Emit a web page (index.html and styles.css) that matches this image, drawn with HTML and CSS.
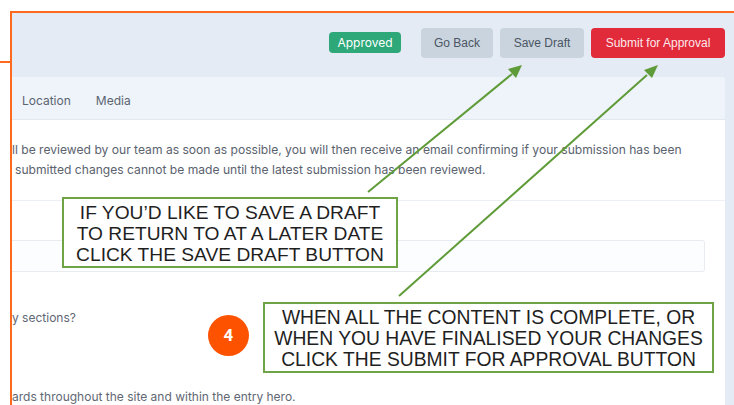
FILE: index.html
```html
<!DOCTYPE html>
<html lang="en">
<head>
<meta charset="utf-8">
<title>Edit Entry</title>
<link rel="stylesheet" href="styles.css">
</head>
<body>
<div class="frame">
  <header class="topbar">
    <span class="badge">Approved</span>
    <button class="btn btn-muted">Go Back</button>
    <button class="btn btn-muted">Save Draft</button>
    <button class="btn btn-danger">Submit for Approval</button>
  </header>
  <section class="card">
    <nav class="tabs">
      <span class="tab">Location</span>
      <span class="tab">Media</span>
    </nav>
    <div class="notice">
      <p>ll be reviewed by our team as soon as possible, you will then receive an email confirming if your submission has been</p>
      <p class="indent">submitted changes cannot be made until the latest submission has been reviewed.</p>
    </div>
    <div class="field">
      <div class="input"></div>
    </div>
    <p class="question">y sections?</p>
    <p class="question last">ards throughout the site and within the entry hero.</p>
  </section>
</div>

<span class="tick"></span>

<div class="callout callout-draft">IF YOU’D LIKE TO SAVE A DRAFT<br>TO RETURN TO AT A LATER DATE<br>CLICK THE SAVE DRAFT BUTTON</div>
<div class="callout callout-submit">WHEN ALL THE CONTENT IS COMPLETE, OR<br>WHEN YOU HAVE FINALISED YOUR CHANGES<br>CLICK THE SUBMIT FOR APPROVAL BUTTON</div>
<div class="step">4</div>

<svg class="arrows" width="734" height="405" viewBox="0 0 734 405">
  <!-- pointer to Save Draft -->
  <line x1="368" y1="192" x2="512" y2="74" />
  <polygon points="522,65 516,78 508,69" />
  <!-- pointer to Submit for Approval -->
  <line x1="399" y1="296" x2="647" y2="75" />
  <polygon points="658,65 652,78 644,70" />
</svg>
</body>
</html>
```

FILE: styles.css
```css
html, body {
  margin: 0;
  padding: 0;
}

body {
  position: relative;
  width: 734px;
  height: 405px;
  overflow: hidden;
  background: #ffffff;
  font-family: Inter, "Liberation Sans", Arial, sans-serif;
}

.frame {
  margin: 11px 0 0 10px;
  height: 394px;
  border-top: 2px solid #ff6a1f;
  border-left: 2px solid #ff6a1f;
  background: #e4ebf4;
  overflow: hidden;
}

.tick {
  position: absolute;
  left: 0;
  top: 61px;
  width: 11px;
  height: 2px;
  background: #ff6a1f;
}

.topbar {
  height: 64px;
  display: flex;
  justify-content: flex-end;
  align-items: flex-start;
  gap: 7px;
  padding: 15px 9px 0 0;
  box-sizing: border-box;
}

.badge {
  margin-top: 4px;
  margin-right: 13px;
  width: 72px;
  height: 21px;
  line-height: 21px;
  text-align: center;
  background: #2ea879;
  color: #ffffff;
  font-size: 12px;
  border-radius: 4px;
}

.btn {
  height: 30px;
  border: 0;
  border-radius: 4px;
  font-family: "Liberation Sans", Arial, sans-serif;
  font-size: 12px;
  padding: 0;
}

.btn-muted {
  background: #c9d4df;
  color: #4b5563;
}

.btn-muted:nth-of-type(1) { width: 72px; }
.btn-muted:nth-of-type(2) { width: 84px; }

.btn-danger {
  width: 134px;
  background: #e12a3a;
  color: #fde8ea;
}

.card {
  margin-right: 9px;
  background: #ffffff;
  border-top-right-radius: 4px;
  height: 330px;
}

.tabs {
  height: 43px;
  box-sizing: border-box;
  display: flex;
  align-items: center;
  gap: 25px;
  padding: 5px 0 0 10px;
  background: #eff4fa;
  border-bottom: 1px solid #e2e8ef;
  border-top-right-radius: 4px;
  font-size: 12px;
  color: #5b6472;
}

.notice {
  padding: 20px 0 20px 0;
  border-bottom: 1px solid #eceff3;
  font-size: 12.1px;
  color: #5a626e;
}

.notice p {
  margin: 0;
  line-height: 20px;
  white-space: nowrap;
}

.notice .indent {
  padding-left: 3px;
}

.field {
  padding: 39px 20px 0 0;
}

.input {
  height: 30px;
  border: 1px solid #e8ecf1;
  border-left: 0;
  border-radius: 0 3px 3px 0;
  background: #fcfdfe;
}

.question {
  margin: 38px 0 0 0;
  font-size: 12px;
  color: #5f6773;
  line-height: 16px;
  white-space: nowrap;
}

.question.last {
  margin-top: 63px;
}

.callout {
  position: absolute;
  box-sizing: border-box;
  height: 71px;
  padding-top: 3px;
  border: 2px solid #6ea346;
  background: #ffffff;
  color: #1f1f1f;
  font-family: "Liberation Sans", Arial, sans-serif;
  font-size: 19.2px;
  line-height: 21px;
  text-align: center;
  white-space: nowrap;
}

.callout-draft {
  left: 62px;
  top: 197px;
  width: 336px;
}

.callout-submit {
  left: 263px;
  top: 302px;
  width: 451px;
  font-size: 19.3px;
}

.step {
  position: absolute;
  left: 208px;
  top: 315px;
  width: 41px;
  height: 41px;
  border-radius: 50%;
  background: #fd5300;
  color: #ffffff;
  font-family: Roboto, "Liberation Sans", sans-serif;
  font-weight: 700;
  font-size: 17px;
  line-height: 41px;
  text-align: center;
}

.arrows {
  position: absolute;
  left: 0;
  top: 0;
  pointer-events: none;
}

.arrows line {
  stroke: #5f9b38;
  stroke-width: 2;
}

.arrows polygon {
  fill: #5f9b38;
}
```
